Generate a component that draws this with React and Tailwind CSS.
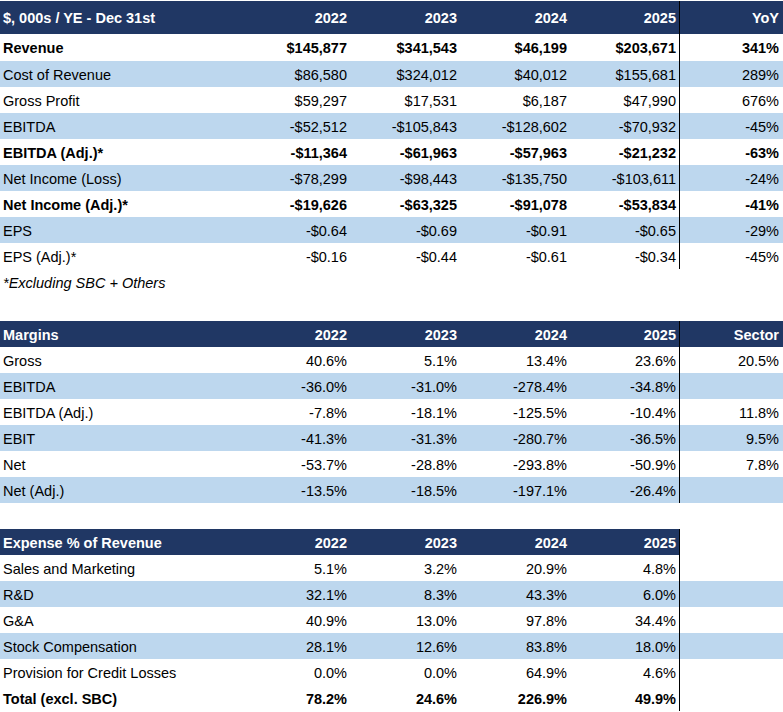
import React from "react";

const GRID = "grid grid-cols-[240px_110px_110px_110px_109px_104px]";

function Header({ title, cols, last, tall }) {
  return (
    <div className={`${GRID} ${tall ? "h-[33px]" : "h-[26px]"} text-white font-bold`}>
      <div className="bg-[#203764] pl-[3px] pt-[2px] flex items-center">{title}</div>
      {cols.map((c) => (
        <div key={c} className="bg-[#203764] pr-[3px] pt-[2px] flex items-center justify-end">{c}</div>
      ))}
      <div className={`border-l border-black pr-[4px] pt-[2px] flex items-center justify-end ${last ? "bg-[#203764]" : "bg-white"}`}>
        {last}
      </div>
    </div>
  );
}

function Row({ label, vals, last, blue, bold, h = "h-[26px]" }) {
  return (
    <div className={`${GRID} ${h} ${blue ? "bg-[#BDD7EE]" : "bg-white"} ${bold ? "font-bold" : ""}`}>
      <div className="pl-[3px] pt-[2px] flex items-center whitespace-nowrap">{label}</div>
      {vals.map((v, i) => (
        <div key={i} className="pr-[3px] pt-[2px] flex items-center justify-end">{v}</div>
      ))}
      <div className="border-l border-black pr-[4px] pt-[2px] flex items-center justify-end">{last}</div>
    </div>
  );
}

const fin = [
  ["Revenue", ["$145,877", "$341,543", "$46,199", "$203,671"], "341%", false, true],
  ["Cost of Revenue", ["$86,580", "$324,012", "$40,012", "$155,681"], "289%", true, false],
  ["Gross Profit", ["$59,297", "$17,531", "$6,187", "$47,990"], "676%", false, false],
  ["EBITDA", ["-$52,512", "-$105,843", "-$128,602", "-$70,932"], "-45%", true, false],
  ["EBITDA (Adj.)*", ["-$11,364", "-$61,963", "-$57,963", "-$21,232"], "-63%", false, true],
  ["Net Income (Loss)", ["-$78,299", "-$98,443", "-$135,750", "-$103,611"], "-24%", true, false],
  ["Net Income (Adj.)*", ["-$19,626", "-$63,325", "-$91,078", "-$53,834"], "-41%", false, true],
  ["EPS", ["-$0.64", "-$0.69", "-$0.91", "-$0.65"], "-29%", true, false],
  ["EPS (Adj.)*", ["-$0.16", "-$0.44", "-$0.61", "-$0.34"], "-45%", false, false],
];

const margins = [
  ["Gross", ["40.6%", "5.1%", "13.4%", "23.6%"], "20.5%", false],
  ["EBITDA", ["-36.0%", "-31.0%", "-278.4%", "-34.8%"], "", true],
  ["EBITDA (Adj.)", ["-7.8%", "-18.1%", "-125.5%", "-10.4%"], "11.8%", false],
  ["EBIT", ["-41.3%", "-31.3%", "-280.7%", "-36.5%"], "9.5%", true],
  ["Net", ["-53.7%", "-28.8%", "-293.8%", "-50.9%"], "7.8%", false],
  ["Net (Adj.)", ["-13.5%", "-18.5%", "-197.1%", "-26.4%"], "", true],
];

const expenses = [
  ["Sales and Marketing", ["5.1%", "3.2%", "20.9%", "4.8%"], false, false],
  ["R&D", ["32.1%", "8.3%", "43.3%", "6.0%"], true, false],
  ["G&A", ["40.9%", "13.0%", "97.8%", "34.4%"], false, false],
  ["Stock Compensation", ["28.1%", "12.6%", "83.8%", "18.0%"], true, false],
  ["Provision for Credit Losses", ["0.0%", "0.0%", "64.9%", "4.6%"], false, false],
  ["Total (excl. SBC)", ["78.2%", "24.6%", "226.9%", "49.9%"], false, true],
];

const years = ["2022", "2023", "2024", "2025"];

export default function App() {
  return (
    <div className="w-[783px] h-[712px] bg-white text-black text-[14.5px] leading-none font-['Liberation_Sans',Arial,sans-serif] pt-px overflow-hidden">
      <Header title="$, 000s / YE - Dec 31st" cols={years} last="YoY" tall />
      {fin.map(([l, v, y, b, bo], i) => (
        <Row key={l} label={l} vals={v} last={y} blue={b} bold={bo} h={i === 0 ? "h-[27px]" : "h-[26px]"} />
      ))}
      <div className="h-[26px] pl-[3px] pt-[2px] flex items-center italic">*Excluding SBC + Others</div>
      <div className="h-[26px]" />
      <Header title="Margins" cols={years} last="Sector" />
      {margins.map(([l, v, s, b]) => (
        <Row key={l} label={l} vals={v} last={s} blue={b} />
      ))}
      <div className="h-[26px]" />
      <Header title="Expense % of Revenue" cols={years} last="" />
      {expenses.map(([l, v, b, bo]) => (
        <Row key={l} label={l} vals={v} last="" blue={b} bold={bo} />
      ))}
    </div>
  );
}
